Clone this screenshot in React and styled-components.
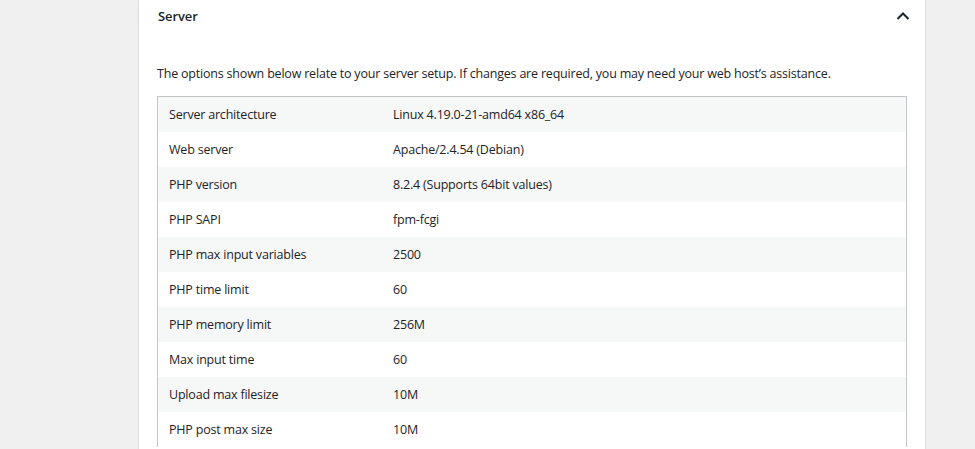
import styled, { createGlobalStyle } from 'styled-components';

const GlobalStyle = createGlobalStyle`
  html, body {
    margin: 0;
    background: #f0f0f1;
    font-family: "Open Sans", "Noto Sans", sans-serif;
    color: #1d2327;
  }
`;

const Page = styled.div`
  height: 449px;
  overflow: hidden;
  padding-left: 138px;
`;

const Panel = styled.section`
  width: 786px;
  min-height: 449px;
  background: #fff;
  border-left: 1px solid #dcdcde;
  border-right: 1px solid #dcdcde;
`;

const Header = styled.div`
  display: flex;
  align-items: center;
  justify-content: space-between;
  height: 32px;
  padding: 0 14px 0 19px;
`;

const Title = styled.h3`
  margin: 0;
  font-size: 13px;
  font-weight: 600;
  letter-spacing: -0.1px;
`;

const Body = styled.div`
  padding: 0 18px;
`;

const Intro = styled.p`
  margin: 32px 0 12px;
  font-size: 12.5px;
  letter-spacing: -0.2px;
  line-height: 20px;
`;

const Table = styled.table`
  width: 750px;
  border-collapse: collapse;
  border: 1px solid #c3c4c7;
  border-bottom: none;
  font-size: 12.5px;
  letter-spacing: -0.2px;
`;

const Row = styled.tr`
  background: ${(p) => (p.$striped ? '#f6f7f7' : '#fff')};
`;

const Cell = styled.td`
  height: 35px;
  padding: 0 11px;
  vertical-align: middle;
  width: ${(p) => (p.$label ? '202px' : 'auto')};
`;

const rows = [
  ['Server architecture', 'Linux 4.19.0-21-amd64 x86_64'],
  ['Web server', 'Apache/2.4.54 (Debian)'],
  ['PHP version', '8.2.4 (Supports 64bit values)'],
  ['PHP SAPI', 'fpm-fcgi'],
  ['PHP max input variables', '2500'],
  ['PHP time limit', '60'],
  ['PHP memory limit', '256M'],
  ['Max input time', '60'],
  ['Upload max filesize', '10M'],
  ['PHP post max size', '10M'],
];

const ChevronUp = () => (
  <svg width="16" height="16" viewBox="0 0 16 16" fill="none">
    <path d="M2.5 11L8 5.5L13.5 11" stroke="#1d2327" strokeWidth="2" />
  </svg>
);

export default function App() {
  return (
    <>
      <GlobalStyle />
      <Page>
        <Panel>
          <Header>
            <Title>Server</Title>
            <ChevronUp />
          </Header>
          <Body>
            <Intro>
              The options shown below relate to your server setup. If changes are required, you may need your web host’s assistance.
            </Intro>
            <Table>
              <tbody>
                {rows.map(([label, value], i) => (
                  <Row key={label} $striped={i % 2 === 0}>
                    <Cell $label>{label}</Cell>
                    <Cell>{value}</Cell>
                  </Row>
                ))}
              </tbody>
            </Table>
          </Body>
        </Panel>
      </Page>
    </>
  );
}
